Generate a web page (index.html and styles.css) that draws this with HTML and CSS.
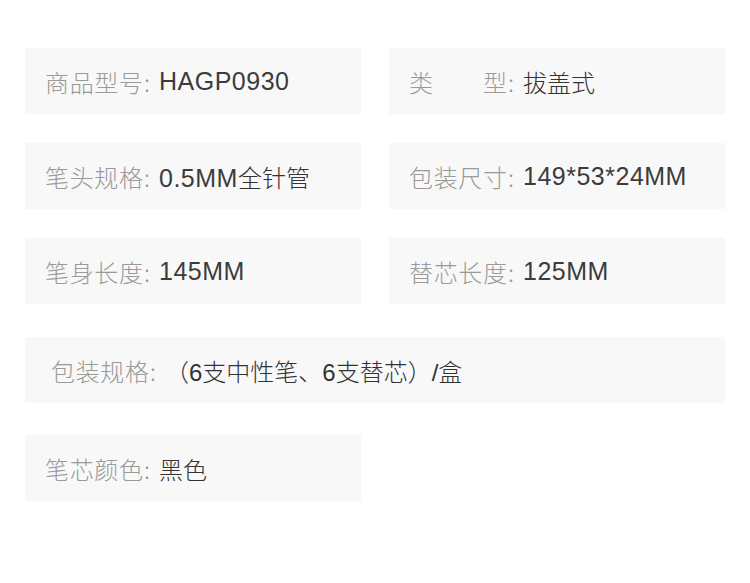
FILE: index.html
```html
<!DOCTYPE html>
<html lang="zh-CN">
<head>
<meta charset="UTF-8" />
<meta name="viewport" content="width=device-width, initial-scale=1" />
<title>产品参数</title>
<link rel="stylesheet" href="styles.css">
</head>
<body>
<div class="specs">
  <div class="spec"><span class="label">商品型号</span><span class="colon">:</span><span class="value"><span class="en">HAGP0930</span></span></div>
  <div class="spec"><span class="label">类型</span><span class="colon">:</span><span class="value">拔盖式</span></div>
  <div class="spec"><span class="label">笔头规格</span><span class="colon">:</span><span class="value"><span class="en">0.5MM</span>全针管</span></div>
  <div class="spec"><span class="label">包装尺寸</span><span class="colon">:</span><span class="value"><span class="en">149*53*24MM</span></span></div>
  <div class="spec"><span class="label">笔身长度</span><span class="colon">:</span><span class="value"><span class="en">145MM</span></span></div>
  <div class="spec"><span class="label">替芯长度</span><span class="colon">:</span><span class="value"><span class="en">125MM</span></span></div>
  <div class="spec wide"><span class="label">包装规格</span><span class="colon">:</span><span class="value">（6支中性笔、6支替芯）/盒</span></div>
  <div class="spec"><span class="label">笔芯颜色</span><span class="colon">:</span><span class="value">黑色</span></div>
</div>
</body>
</html>
```

FILE: styles.css
```css
body { margin: 0; background: #fff; font-family: "Noto Sans CJK SC", "Noto Sans", sans-serif; font-weight: 300; }
.specs { display: grid; grid-template-columns: 336px 336px; column-gap: 28px; row-gap: 29px; padding: 48px 25px; }
.spec { display: flex; align-items: center; height: 66px; padding-left: 20px; background: #f8f8f8; font-size: 24px; white-space: nowrap; }
.spec.wide { grid-column: 1 / 3; padding-left: 26px; margin: 4px 0 3px; }
.label { display: inline-block; width: 98px; color: #9a9a9a; text-align: justify; text-align-last: justify; }
.colon { color: #9a9a9a; margin: 0 9px 0 1px; }
.value { color: #333; font-family: "Liberation Sans", "Noto Sans CJK SC", sans-serif; }
.en { color: #3c3c3c; font-size: 25px; letter-spacing: 0.5px; }
```
